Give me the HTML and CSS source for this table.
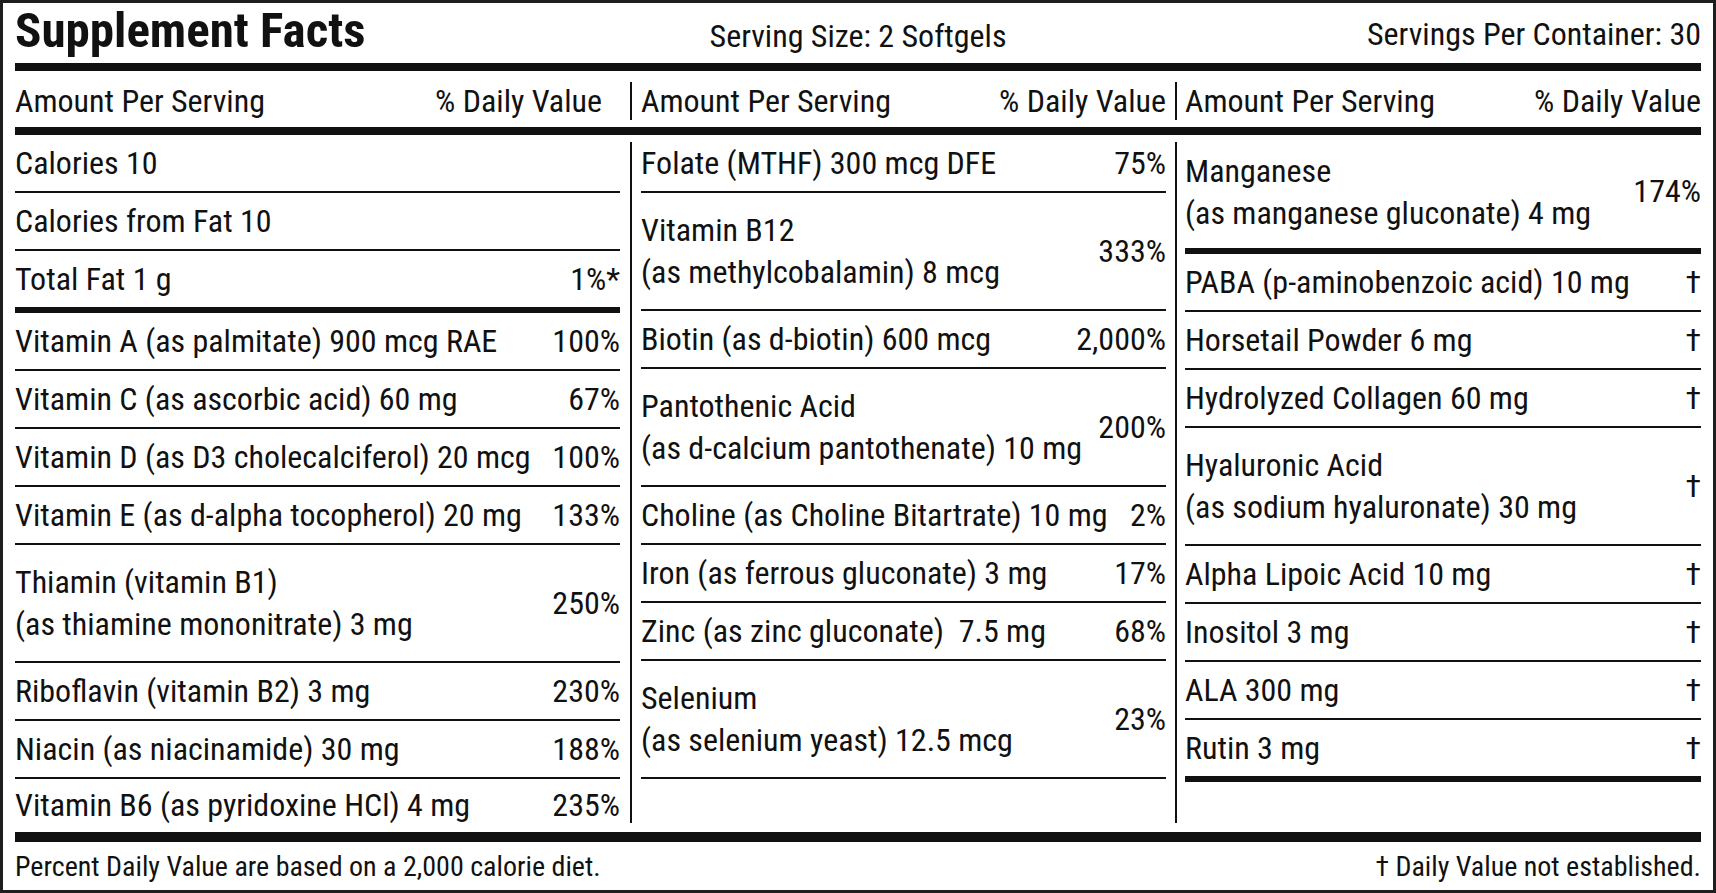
FILE: index.html
```html
<!DOCTYPE html>
<html>
<head>
<meta charset="utf-8">
<title>Supplement Facts</title>
<link rel="stylesheet" href="styles.css">
</head>
<body>
<div class="label">
  <div class="top">
    <h1 class="title">Supplement Facts</h1>
    <div class="serving">Serving Size: 2 Softgels</div>
    <div class="servings">Servings Per Container: 30</div>
  </div>
  <div class="rule"></div>
  <div class="cols head">
    <div class="col c1 hcell first"><span>Amount Per Serving</span><span>% Daily Value</span></div>
    <div class="vdiv a"></div>
    <div class="col c2 hcell"><span>Amount Per Serving</span><span>% Daily Value</span></div>
    <div class="vdiv b"></div>
    <div class="col c3 hcell"><span>Amount Per Serving</span><span>% Daily Value</span></div>
  </div>
  <div class="rule"></div>
  <div class="cols body">
    <div class="col c1">
      <div class="row"><span>Calories 10</span></div>
      <div class="row"><span>Calories from Fat 10</span></div>
      <div class="row thick"><span>Total Fat 1 g</span><span>1%*</span></div>
      <div class="row"><span>Vitamin A (as palmitate) 900 mcg RAE</span><span>100%</span></div>
      <div class="row"><span>Vitamin C (as ascorbic acid) 60 mg</span><span>67%</span></div>
      <div class="row"><span>Vitamin D (as D3 cholecalciferol) 20 mcg</span><span>100%</span></div>
      <div class="row"><span>Vitamin E (as d-alpha tocopherol) 20 mg</span><span>133%</span></div>
      <div class="row tall"><span class="two">Thiamin (vitamin B1)<br>(as thiamine mononitrate) 3 mg</span><span>250%</span></div>
      <div class="row"><span>Riboflavin (vitamin B2) 3 mg</span><span>230%</span></div>
      <div class="row"><span>Niacin (as niacinamide) 30 mg</span><span>188%</span></div>
      <div class="row last"><span>Vitamin B6 (as pyridoxine HCl) 4 mg</span><span>235%</span></div>
    </div>
    <div class="vdiv a"></div>
    <div class="col c2">
      <div class="row"><span>Folate (MTHF) 300 mcg DFE</span><span>75%</span></div>
      <div class="row tall"><span class="two">Vitamin B12<br>(as methylcobalamin) 8 mcg</span><span>333%</span></div>
      <div class="row"><span>Biotin (as d-biotin) 600 mcg</span><span>2,000%</span></div>
      <div class="row tall"><span class="two">Pantothenic Acid<br>(as d-calcium pantothenate) 10 mg</span><span>200%</span></div>
      <div class="row"><span>Choline (as Choline Bitartrate) 10 mg</span><span>2%</span></div>
      <div class="row"><span>Iron (as ferrous gluconate) 3 mg</span><span>17%</span></div>
      <div class="row"><span>Zinc (as zinc gluconate)&nbsp; 7.5 mg</span><span>68%</span></div>
      <div class="row tall"><span class="two">Selenium<br>(as selenium yeast) 12.5 mcg</span><span>23%</span></div>
    </div>
    <div class="vdiv b"></div>
    <div class="col c3">
      <div class="row tall thick mn"><span class="two">Manganese<br>(as manganese gluconate) 4 mg</span><span>174%</span></div>
      <div class="row"><span>PABA (p-aminobenzoic acid) 10 mg</span><span>†</span></div>
      <div class="row"><span>Horsetail Powder 6 mg</span><span>†</span></div>
      <div class="row"><span>Hydrolyzed Collagen 60 mg</span><span>†</span></div>
      <div class="row tall"><span class="two">Hyaluronic Acid<br>(as sodium hyaluronate) 30 mg</span><span>†</span></div>
      <div class="row"><span>Alpha Lipoic Acid 10 mg</span><span>†</span></div>
      <div class="row"><span>Inositol 3 mg</span><span>†</span></div>
      <div class="row"><span>ALA 300 mg</span><span>†</span></div>
      <div class="row thick"><span>Rutin 3 mg</span><span>†</span></div>
    </div>
  </div>
  <div class="rule bottom"></div>
  <div class="foot">
    <span>Percent Daily Value are based on a 2,000 calorie diet.</span>
    <span>† Daily Value not established.</span>
  </div>
</div>
</body>
</html>
```

FILE: styles.css
```css
* {
  box-sizing: border-box;
  margin: 0;
  padding: 0;
}

html, body {
  background: #ffffff;
}

body {
  width: 1716px;
  height: 893px;
  font-family: "Roboto Condensed", "Liberation Sans Narrow", "Arial Narrow", "DejaVu Sans Condensed", "Liberation Sans", sans-serif;
  font-stretch: condensed;
  color: #111111;
}

.label {
  width: 1716px;
  height: 893px;
  border: 3px solid #1e1e1e;
  padding: 0 12px;
  display: flex;
  flex-direction: column;
}

.top {
  height: 60px;
  display: grid;
  grid-template-columns: 1fr auto 1fr;
  align-items: end;
  padding-bottom: 10px;
}

.title {
  font-size: 49px;
  font-weight: 700;
  line-height: 1;
  margin-bottom: -2px;
}

.serving {
  font-size: 32px;
  line-height: 1;
  padding-bottom: 1px;
}

.servings {
  justify-self: end;
  font-size: 32px;
  line-height: 1;
  padding-bottom: 3px;
}

.rule {
  height: 8px;
  background: #111111;
  flex: none;
}

.rule.bottom {
  height: 10px;
}

.cols {
  display: flex;
}

.head {
  height: 56px;
  flex: none;
}

.body {
  height: 697px;
  flex: none;
}

.c1 {
  width: 605px;
}

.c2 {
  width: 525px;
}

.c3 {
  flex: 1;
}

.vdiv {
  width: 2px;
  background: #111111;
  flex: none;
}

.vdiv.a {
  margin-left: 10px;
  margin-right: 9px;
}

.vdiv.b {
  margin-left: 9px;
  margin-right: 8px;
}

.head .vdiv {
  margin-top: 11px;
  margin-bottom: 7px;
}

.body .vdiv {
  margin-top: 7px;
  margin-bottom: 9px;
}

.hcell {
  display: flex;
  justify-content: space-between;
  align-items: center;
  font-size: 32px;
  padding-top: 4px;
  white-space: nowrap;
}

.hcell.first {
  padding-right: 18px;
}

.row {
  height: 58px;
  border-bottom: 2px solid #111111;
  display: flex;
  justify-content: space-between;
  align-items: center;
  font-size: 32px;
  line-height: 1.2;
  white-space: nowrap;
}

.row.tall {
  height: 118px;
}

.row.thick {
  height: 62px;
  border-bottom-width: 6px;
}

.row.tall.thick {
  height: 122px;
}

.row.tall.thick.mn {
  height: 119px;
}

.row.last {
  height: 53px;
  border-bottom: none;
}

.two {
  line-height: 42px;
}

.foot {
  flex: 1;
  display: flex;
  justify-content: space-between;
  align-items: center;
  font-size: 28px;
}
```
